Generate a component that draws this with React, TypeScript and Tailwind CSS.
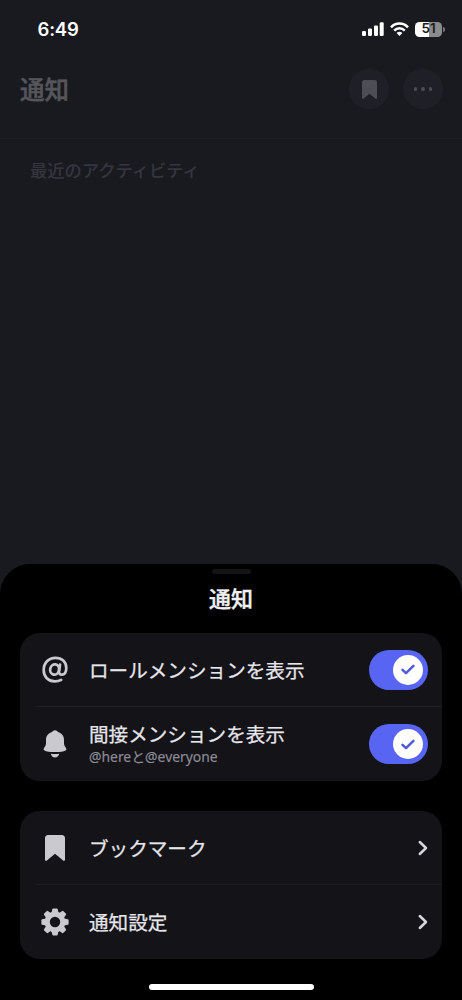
import { useState } from "react";
import type { ReactNode } from "react";

const BOOKMARK_PATH =
  "M3 0H17C18.7 0 20 1.3 20 3V24.3C20 25.3 18.9 25.8 18.1 25.1L10 18.4L1.9 25.1C1.1 25.8 0 25.3 0 24.3V3C0 1.3 1.3 0 3 0Z";

function BookmarkIcon({ className }: { className: string }) {
  return (
    <svg viewBox="0 0 20 25.5" preserveAspectRatio="none" fill="currentColor" className={className}>
      <path d={BOOKMARK_PATH} />
    </svg>
  );
}

function BellIcon() {
  return (
    <svg viewBox="0 0 24 28" fill="currentColor" className="h-7 w-6">
      <path d="M12 0.3C13.3 0.3 14.3 1.1 14.9 2.1C18.9 3.2 21 6.2 21 10V13.6C21 14.8 21.4 15.7 22.2 16.7C23 17.7 23.4 18.6 23.4 19.4C23.4 21 18 22 12 22C6 22 0.6 21 0.6 19.4C0.6 18.6 1 17.7 1.8 16.7C2.6 15.7 3 14.8 3 13.6V10C3 6.2 5.1 3.2 9.1 2.1C9.7 1.1 10.7 0.3 12 0.3Z" />
      <path d="M7.8 23.8C10.4 24.2 13.6 24.2 16.2 23.8C15.8 26.1 14.2 27.6 12 27.6C9.8 27.6 8.2 26.1 7.8 23.8Z" />
    </svg>
  );
}

function GearIcon() {
  const angles = [0, 45, 90, 135, 180, 225, 270, 315];
  return (
    <svg viewBox="-14 -14 28 28" fill="currentColor" className="size-7">
      <circle r="7.8" fill="none" stroke="currentColor" strokeWidth="5.2" />
      {angles.map((angle) => (
        <path
          key={angle}
          transform={`rotate(${angle})`}
          d="M-3.5 -9L-2.7 -12.8Q-2.5 -13.6 -1.7 -13.6H1.7Q2.5 -13.6 2.7 -12.8L3.5 -9Z"
        />
      ))}
    </svg>
  );
}

function AtIcon() {
  return (
    <svg viewBox="0 0 26 27" fill="none" stroke="currentColor" strokeWidth="2.7" strokeLinecap="round" className="h-[27px] w-[26px]">
      <path d="M19.2 23.9C17.4 24.9 15.2 25.4 12.8 25.4C6.2 25.4 1.7 20.8 1.7 14C1.7 7 6.6 1.8 13.4 1.8C19.8 1.8 24.3 5.9 24.3 11.8C24.3 16.2 22.4 18.7 19.8 18.7C17.8 18.7 16.8 17.4 17.1 15.4L18 8.6" />
      <ellipse cx="12.6" cy="13.5" rx="4.4" ry="5.2" transform="rotate(12 12.6 13.5)" />
    </svg>
  );
}

function ChevronIcon() {
  return (
    <svg viewBox="0 0 10 16" fill="none" stroke="currentColor" strokeWidth="2.5" strokeLinecap="round" strokeLinejoin="round" className="h-4 w-2.5 text-[#d6d6dc]">
      <path d="M1.8 2L8 8L1.8 14" />
    </svg>
  );
}

function StatusBar() {
  return (
    <div className="flex h-[58px] items-center justify-between pr-[17px] pl-[37.5px] text-white">
      <span className="pt-px font-['Inter'] text-[18.5px] font-semibold tracking-[-0.2px]">6:49</span>
      <div className="flex items-center gap-1.5">
        <svg viewBox="0 0 22 14" fill="currentColor" className="h-3.5 w-[22px]">
          <rect x="0" y="9" width="4" height="5" rx="1.2" />
          <rect x="6" y="6.4" width="4" height="7.6" rx="1.2" />
          <rect x="12" y="3.4" width="4" height="10.6" rx="1.2" />
          <rect x="17.7" y="0.2" width="4" height="13.8" rx="1.2" />
        </svg>
        <svg viewBox="0 0 19 14" fill="none" stroke="currentColor" strokeWidth="2.5" className="h-3.5 w-[19px]">
          <path d="M1 5.3C5.7 0.3 13.3 0.3 18 5.3" />
          <path d="M4.2 8.6C7.2 5.5 11.8 5.5 14.8 8.6" />
          <path d="M6.6 10.9C8.3 9.3 10.7 9.3 12.4 10.9L9.5 13.9Z" fill="currentColor" stroke="none" />
        </svg>
        <div className="flex items-center gap-px">
          <div className="flex h-[15px] w-[27px] items-center justify-center rounded-[4.5px] bg-linear-to-r from-white from-52% to-[#8b8b8e] to-52% font-['Inter'] text-[13.5px] leading-none font-semibold text-[#1a1b20]">
            51
          </div>
          <div className="h-[5px] w-[2px] rounded-r-full bg-[#77777b]" />
        </div>
      </div>
    </div>
  );
}

function Toggle({ label }: { label: string }) {
  const [on, setOn] = useState(true);

  return (
    <button
      role="switch"
      aria-checked={on}
      aria-label={label}
      onClick={() => setOn(!on)}
      className={`flex h-10 w-[59px] shrink-0 items-center rounded-full px-[5px] ${on ? "justify-end bg-[#5865f2]" : "justify-start bg-[#3a3a44]"}`}
    >
      <span className="flex size-[30px] items-center justify-center rounded-full bg-white">
        {on && (
          <svg viewBox="0 0 14 11" fill="none" stroke="#4f5bd5" strokeWidth="2.5" strokeLinecap="round" strokeLinejoin="round" className="h-[11px] w-3.5">
            <path d="M1.5 5.8L5 9.2L12.4 1.8" />
          </svg>
        )}
      </span>
    </button>
  );
}

interface RowProps {
  icon: ReactNode;
  title: string;
  subtitle?: string;
  children: ReactNode;
}

function Row({ icon, title, subtitle, children }: RowProps) {
  return (
    <div className="flex h-full items-center pr-3.5">
      <div className="flex w-[69px] shrink-0 items-center justify-center text-[#c9c9cf]">{icon}</div>
      <div className="flex-1 pt-0.5">
        <div className="text-[19.6px] leading-6 whitespace-nowrap text-[#e6e6ea] [-webkit-text-stroke:0.25px_#e6e6ea]">{title}</div>
        {subtitle && (
          <div className="font-['Noto_Sans','Noto_Sans_CJK_JP',sans-serif] text-[13.9px] leading-5 whitespace-nowrap text-[#8c8c96] [-webkit-text-stroke:0.15px_#8c8c96]">
            {subtitle}
          </div>
        )}
      </div>
      {children}
    </div>
  );
}

function Card({ top, bottom }: { top: ReactNode; bottom: ReactNode }) {
  return (
    <div className="flex h-[148px] flex-col rounded-[20px] bg-[#141318]">
      <div className="h-[73px]">{top}</div>
      <div className="ml-4 h-px bg-[#1d1d22]" />
      <div className="h-[74px]">{bottom}</div>
    </div>
  );
}

export default function App() {
  return (
    <div className="flex h-[1000px] w-[462px] flex-col overflow-hidden bg-[#191a1f] font-['Inter','Noto_Sans_CJK_JP',sans-serif]">
      <StatusBar />

      <header className="flex h-[81px] items-start justify-between border-b border-[#1f2026] pt-[11px] pr-[19px] pl-5">
        <h1 className="pt-px text-[24.5px] leading-10 font-medium text-[#55565b] [-webkit-text-stroke:0.5px_#55565b]">通知</h1>
        <div className="flex gap-3.5">
          <button aria-label="ブックマーク" className="flex size-10 items-center justify-center rounded-full bg-[#1f1f27] text-[#4d4d55]">
            <BookmarkIcon className="h-[19px] w-[15px]" />
          </button>
          <button aria-label="通知設定" className="flex size-10 items-center justify-center gap-1 rounded-full bg-[#1f1f27]">
            <span className="size-[3.5px] rounded-full bg-[#4d4d55]" />
            <span className="size-[3.5px] rounded-full bg-[#4d4d55]" />
            <span className="size-[3.5px] rounded-full bg-[#4d4d55]" />
          </button>
        </div>
      </header>

      <main className="flex-1 pt-5 pl-[30px]">
        <h2 className="text-[17.3px] leading-6 font-medium text-[#35353f]">最近のアクティビティ</h2>
      </main>

      <section className="flex h-[436px] flex-col items-center rounded-t-[30px] bg-black pt-[5px]">
        <div className="h-[5px] w-[39px] rounded-full bg-[#141417]" />
        <h2 className="mt-[9px] text-[22px] leading-8 font-medium text-[#f0f0f3] [-webkit-text-stroke:0.4px_#f0f0f3]">通知</h2>

        <div className="mt-[18px] flex w-[422px] flex-col gap-[30px]">
          <Card
            top={
              <Row icon={<AtIcon />} title="ロールメンションを表示">
                <Toggle label="ロールメンションを表示" />
              </Row>
            }
            bottom={
              <Row icon={<BellIcon />} title="間接メンションを表示" subtitle="@hereと@everyone">
                <Toggle label="間接メンションを表示" />
              </Row>
            }
          />
          <Card
            top={
              <Row icon={<BookmarkIcon className="h-[26px] w-5" />} title="ブックマーク">
                <ChevronIcon />
              </Row>
            }
            bottom={
              <Row icon={<GearIcon />} title="通知設定">
                <ChevronIcon />
              </Row>
            }
          />
        </div>

        <div className="mt-[25px] h-1.5 w-[165px] rounded-full bg-white" />
      </section>
    </div>
  );
}
